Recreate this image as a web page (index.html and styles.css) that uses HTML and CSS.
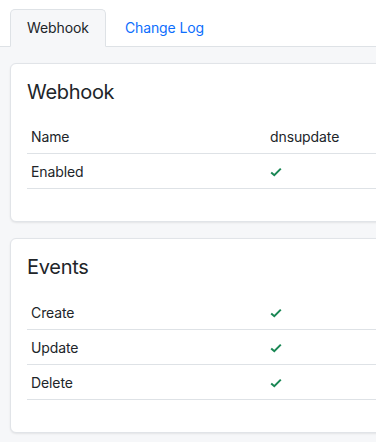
FILE: index.html
```html
<!DOCTYPE html>
<html lang="en">
<head>
    <meta charset="UTF-8">
    <meta name="viewport" content="width=device-width, initial-scale=1.0">
    <title>Webhook</title>
    <link rel="stylesheet" href="styles.css">
</head>
<body>
    <!-- Tabs -->
    <ul class="tabs">
        <li class="tab activo">Webhook</li>
        <li class="tab"><a href="#">Change Log</a></li>
    </ul>

    <main class="panel">
        <!-- Webhook -->
        <div class="tarjeta">
            <h5>Webhook</h5>
            <table class="tabla">
                <tr><td>Name</td><td>dnsupdate</td></tr>
                <tr><td>Enabled</td><td><span class="ok"><svg viewBox="0 0 12 10" width="12" height="10"><path d="M1.2 5.4 L4.3 8.2 L10.8 1.6" fill="none" stroke="currentColor" stroke-width="2"/></svg></span></td></tr>
            </table>
        </div>

        <!-- Events -->
        <div class="tarjeta">
            <h5>Events</h5>
            <table class="tabla">
                <tr><td>Create</td><td><span class="ok"><svg viewBox="0 0 12 10" width="12" height="10"><path d="M1.2 5.4 L4.3 8.2 L10.8 1.6" fill="none" stroke="currentColor" stroke-width="2"/></svg></span></td></tr>
                <tr><td>Update</td><td><span class="ok"><svg viewBox="0 0 12 10" width="12" height="10"><path d="M1.2 5.4 L4.3 8.2 L10.8 1.6" fill="none" stroke="currentColor" stroke-width="2"/></svg></span></td></tr>
                <tr><td>Delete</td><td><span class="ok"><svg viewBox="0 0 12 10" width="12" height="10"><path d="M1.2 5.4 L4.3 8.2 L10.8 1.6" fill="none" stroke="currentColor" stroke-width="2"/></svg></span></td></tr>
            </table>
        </div>
    </main>
</body>
</html>
```

FILE: styles.css
```css
html, body {
    height: 442px;
    overflow: hidden;
}

body {
    font-family: 'Inter', 'Liberation Sans', sans-serif;
    font-size: 14px;
    letter-spacing: -0.1px;
    margin: 0;
    padding: 0;
    background-color: #fff;
    color: #212529;
    display: flex;
    flex-direction: column;
}

.tabs {
    display: flex;
    gap: 2px;
    list-style: none;
    margin: 0;
    padding: 9px 10px 0;
    border-bottom: 1px solid #dee2e6;
}

.tab {
    padding: 8px 16px;
    line-height: 20px;
    margin-bottom: -1px;
    border: 1px solid transparent;
    border-radius: 5px 5px 0 0;
}

.tab a {
    color: #0d6efd;
    text-decoration: none;
}

.tab.activo {
    background-color: #f6f7f9;
    border-color: #dee2e6 #dee2e6 #f6f7f9;
}

.panel {
    flex: 1;
    background-color: #f6f7f9;
    padding: 16px 0 0 10px;
    overflow: hidden;
}

.tarjeta {
    width: 600px;
    background-color: #fff;
    border: 1px solid #e1e4e8;
    border-radius: 6px;
    box-shadow: 0 1px 2px rgba(0, 0, 0, 0.08);
    padding: 16px;
    margin-bottom: 16px;
}

.tarjeta h5 {
    margin: 0 0 16px;
    font-size: 20px;
    font-weight: 400;
    letter-spacing: -0.3px;
    line-height: 24px;
}

.tabla {
    width: 100%;
    border-collapse: collapse;
    margin-bottom: 16px;
}

.tabla td {
    padding: 7px 4px;
    line-height: 19px;
    border-bottom: 1px solid #dee2e6;
}

.tabla td:first-child {
    width: 231px;
}

.ok {
    color: #198754;
    display: inline-block;
    vertical-align: -1px;
}
```
